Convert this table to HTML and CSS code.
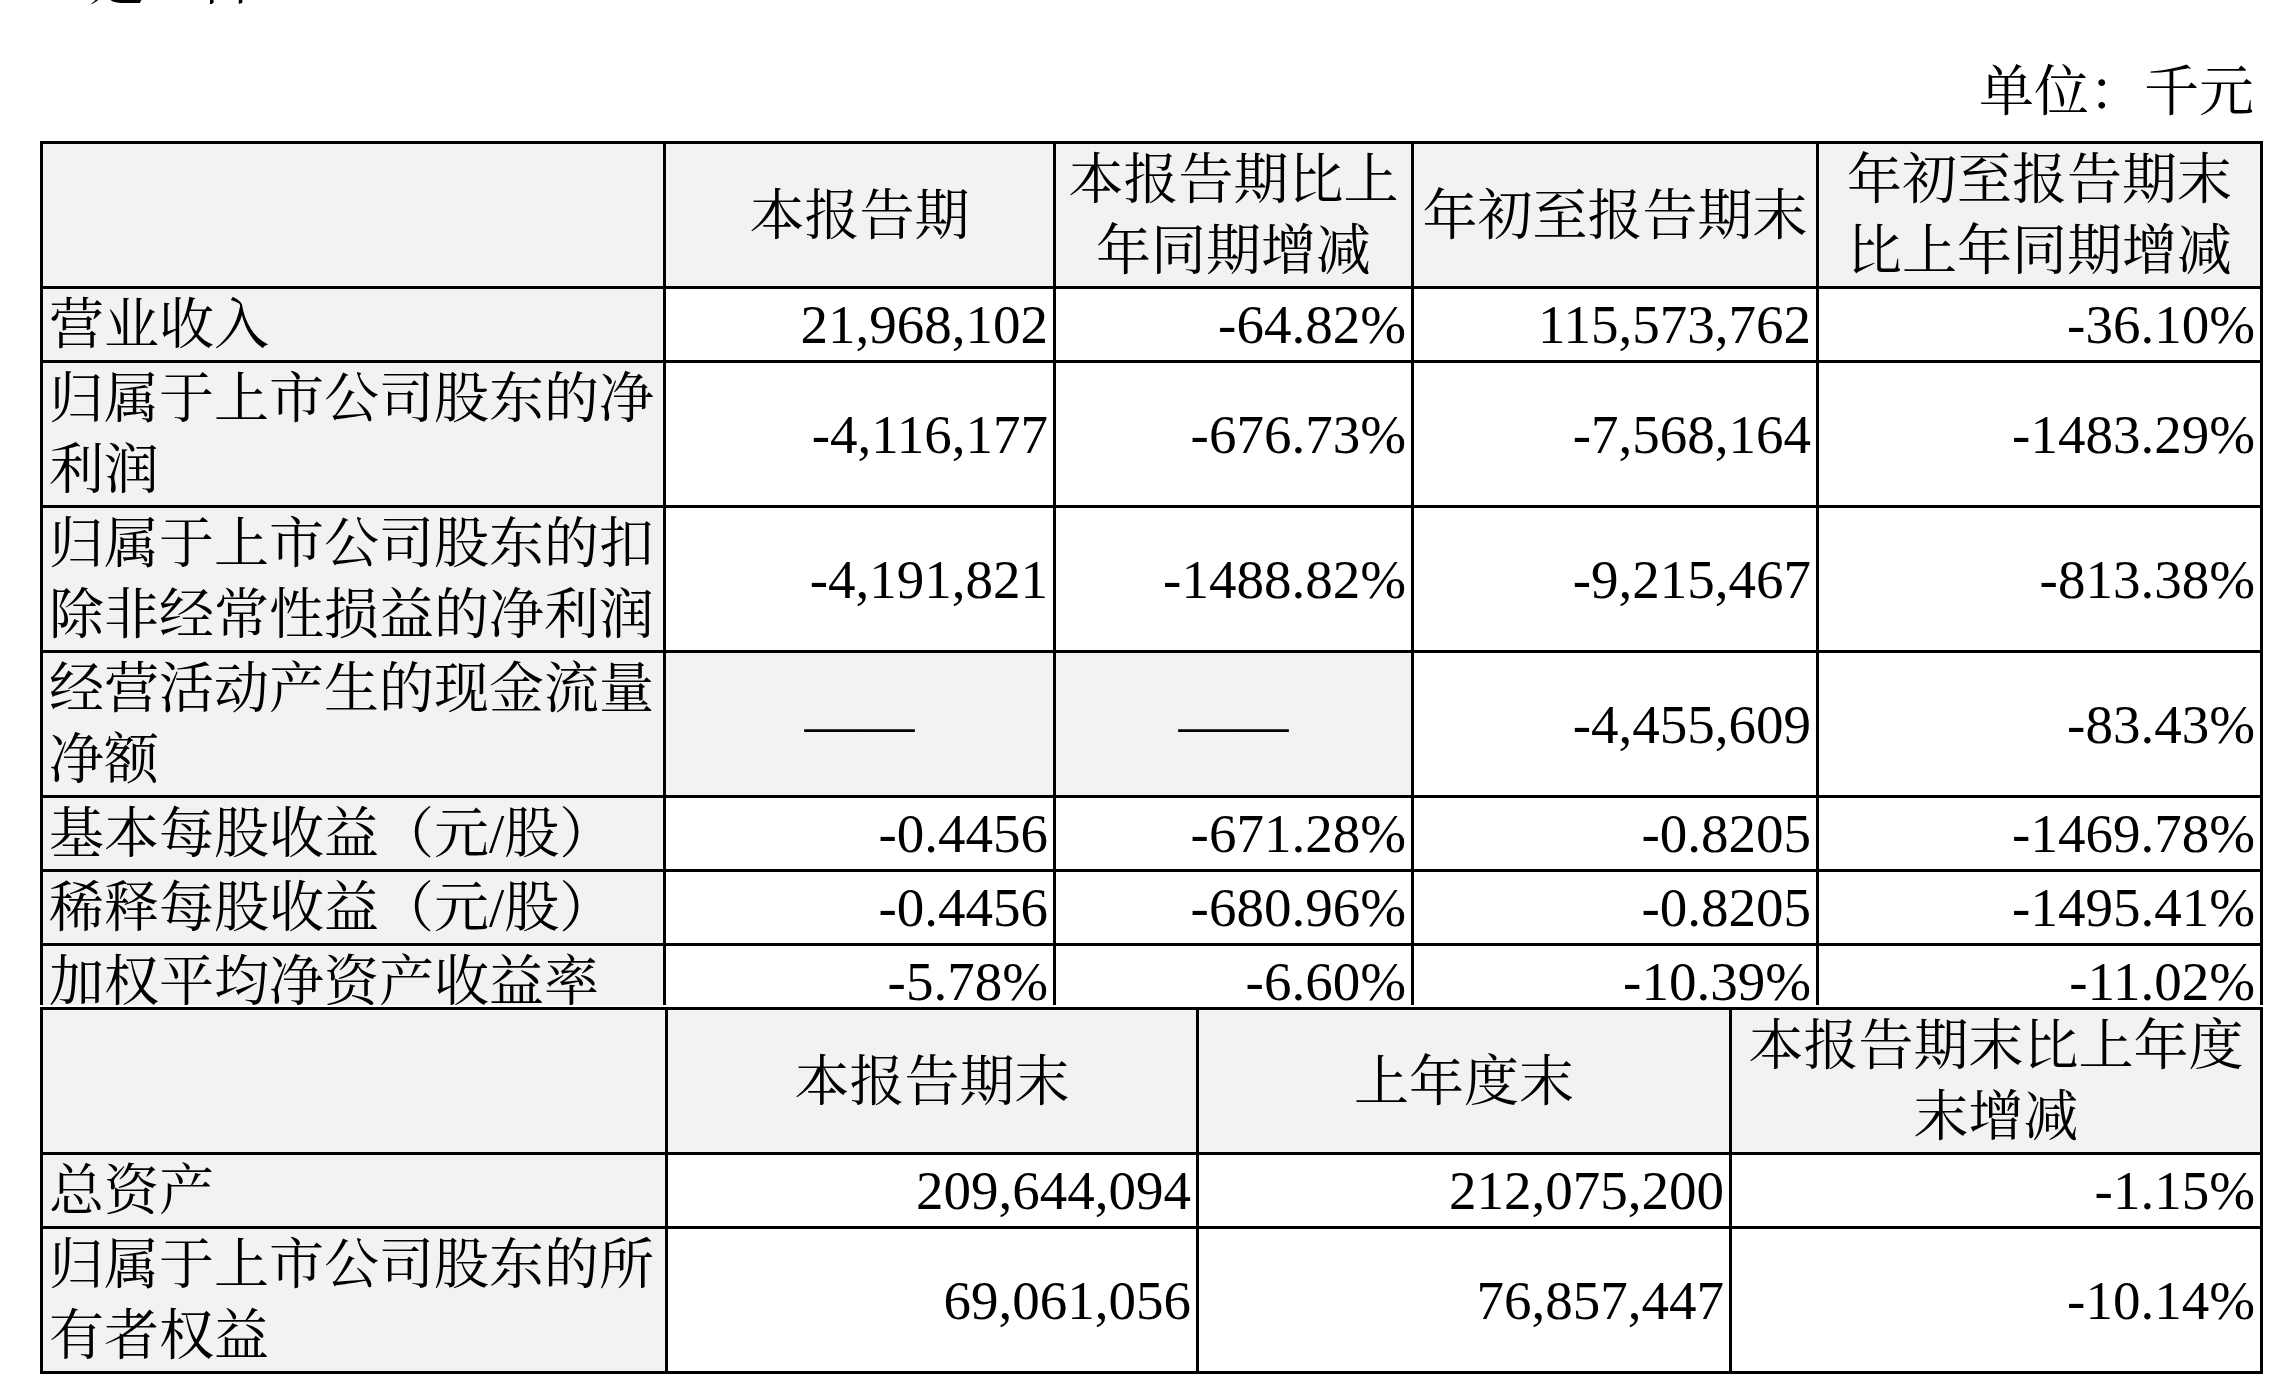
FILE: index.html
```html
<!DOCTYPE html>
<html lang="zh-CN">
<head>
<meta charset="utf-8">
<title>主要会计数据和财务指标</title>
<link rel="stylesheet" href="styles.css">
</head>
<body>
<div class="page">
  <div class="lead"><div class="lead-line"><span class="lead-a">□是</span><span class="lead-b">√否</span></div></div>
  <div class="unit">单位：千元</div>
  <div class="clip">
    <table class="fin-table">
      <colgroup>
        <col class="c-label"><col class="c1"><col class="c2"><col class="c3"><col class="c4">
      </colgroup>
      <tr>
        <td class="shade"></td>
        <td class="head shade">本报告期</td>
        <td class="head shade">本报告期比上<br>年同期增减</td>
        <td class="head shade">年初至报告期末</td>
        <td class="head shade">年初至报告期末<br>比上年同期增减</td>
      </tr>
      <tr>
        <td class="label shade">营业收入</td>
        <td class="num">21,968,102</td>
        <td class="num">-64.82%</td>
        <td class="num">115,573,762</td>
        <td class="num">-36.10%</td>
      </tr>
      <tr>
        <td class="label shade">归属于上市公司股东的净<br>利润</td>
        <td class="num">-4,116,177</td>
        <td class="num">-676.73%</td>
        <td class="num">-7,568,164</td>
        <td class="num">-1483.29%</td>
      </tr>
      <tr>
        <td class="label shade">归属于上市公司股东的扣<br>除非经常性损益的净利润</td>
        <td class="num">-4,191,821</td>
        <td class="num">-1488.82%</td>
        <td class="num">-9,215,467</td>
        <td class="num">-813.38%</td>
      </tr>
      <tr>
        <td class="label shade">经营活动产生的现金流量<br>净额</td>
        <td class="head shade">——</td>
        <td class="head shade">——</td>
        <td class="num">-4,455,609</td>
        <td class="num">-83.43%</td>
      </tr>
      <tr>
        <td class="label shade">基本每股收益（元/股）</td>
        <td class="num">-0.4456</td>
        <td class="num">-671.28%</td>
        <td class="num">-0.8205</td>
        <td class="num">-1469.78%</td>
      </tr>
      <tr>
        <td class="label shade">稀释每股收益（元/股）</td>
        <td class="num">-0.4456</td>
        <td class="num">-680.96%</td>
        <td class="num">-0.8205</td>
        <td class="num">-1495.41%</td>
      </tr>
      <tr>
        <td class="label shade">加权平均净资产收益率</td>
        <td class="num">-5.78%</td>
        <td class="num">-6.60%</td>
        <td class="num">-10.39%</td>
        <td class="num">-11.02%</td>
      </tr>
    </table>
  </div>
  <table class="fin-table second">
    <colgroup>
      <col class="d-label"><col class="d1"><col class="d2"><col class="d3">
    </colgroup>
    <tr>
      <td class="shade"></td>
      <td class="head shade">本报告期末</td>
      <td class="head shade">上年度末</td>
      <td class="head shade">本报告期末比上年度<br>末增减</td>
    </tr>
    <tr>
      <td class="label shade">总资产</td>
      <td class="num">209,644,094</td>
      <td class="num">212,075,200</td>
      <td class="num">-1.15%</td>
    </tr>
    <tr>
      <td class="label shade">归属于上市公司股东的所<br>有者权益</td>
      <td class="num">69,061,056</td>
      <td class="num">76,857,447</td>
      <td class="num">-10.14%</td>
    </tr>
  </table>
</div>
</body>
</html>
```

FILE: styles.css
```css
html, body {
  margin: 0;
  padding: 0;
  background: #ffffff;
}

.page {
  width: 2289px;
  font-family: "Liberation Serif", "Noto Serif CJK SC", "Noto Sans CJK SC", serif;
  font-size: 55px;
  line-height: 71px;
  color: #000000;
}

.lead {
  height: 5px;
  overflow: hidden;
}

.lead-line {
  margin-top: -55px;
  padding-left: 56px;
  white-space: nowrap;
}

.lead-b {
  margin-left: 24px;
}

.unit {
  margin-top: 51px;
  margin-bottom: 14px;
  padding-right: 35px;
  text-align: right;
  white-space: nowrap;
}

.clip {
  height: 864px;
  overflow: hidden;
}

.fin-table {
  margin-left: 40px;
  border-collapse: collapse;
  table-layout: fixed;
  width: 2223px;
}

.fin-table.second {
  margin-top: 2px;
}

.fin-table td {
  border: 3px solid #000000;
  padding: 0;
  white-space: nowrap;
  vertical-align: middle;
}

.c-label { width: 623px; }
.c1 { width: 390px; }
.c2 { width: 358px; }
.c3 { width: 405px; }
.c4 { width: 444px; }

.d-label { width: 625px; }
.d1 { width: 531px; }
.d2 { width: 533px; }
.d3 { width: 531px; }

.shade {
  background: #f2f2f2;
}

.head {
  text-align: center;
}

.label {
  text-align: left;
  padding-left: 6px !important;
}

.num {
  text-align: right;
  padding-right: 5px !important;
}
```
